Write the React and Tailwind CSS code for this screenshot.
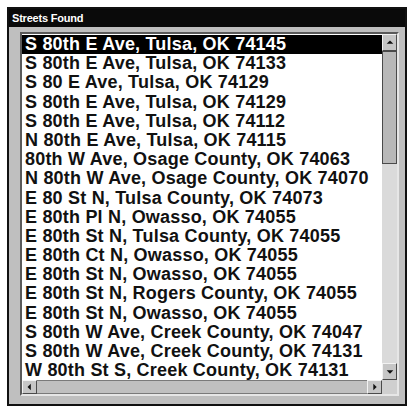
const streets = [
  "S 80th E Ave, Tulsa, OK 74145",
  "S 80th E Ave, Tulsa, OK 74133",
  "S 80 E Ave, Tulsa, OK 74129",
  "S 80th E Ave, Tulsa, OK 74129",
  "S 80th E Ave, Tulsa, OK 74112",
  "N 80th E Ave, Tulsa, OK 74115",
  "80th W Ave, Osage County, OK 74063",
  "N 80th W Ave, Osage County, OK 74070",
  "E 80 St N, Tulsa County, OK 74073",
  "E 80th Pl N, Owasso, OK 74055",
  "E 80th St N, Tulsa County, OK 74055",
  "E 80th Ct N, Owasso, OK 74055",
  "E 80th St N, Owasso, OK 74055",
  "E 80th St N, Rogers County, OK 74055",
  "E 80th St N, Owasso, OK 74055",
  "S 80th W Ave, Creek County, OK 74047",
  "S 80th W Ave, Creek County, OK 74131",
  "W 80th St S, Creek County, OK 74131",
];

// Small bevelled scroll button with a solid triangle
function ArrowBtn({ dir, className = "" }) {
  const pts = {
    up: "2,7 6,3 10,7",
    down: "2,4 6,8 10,4",
    left: "7,2 3,6 7,10",
    right: "4,2 8,6 4,10",
  }[dir];
  return (
    <div
      className={`shrink-0 flex items-center justify-center bg-[#c6c6c6] border border-t-[#f2f2f2] border-l-[#f2f2f2] border-r-[#4a4a4a] border-b-[#4a4a4a] ${className}`}
    >
      <svg width="10" height="10" viewBox="0 0 12 12">
        <polygon points={pts} fill="#111" />
      </svg>
    </div>
  );
}

export default function App() {
  return (
    <div
      className="w-[412px] h-[409px] bg-white pt-[7px] pl-[7px] pr-[5px] pb-[3px]"
      style={{ fontFamily: "'Liberation Sans', Arial, sans-serif" }}
    >
      <div className="h-full w-full border-2 border-[#111] bg-[#bfbfbf] flex flex-col">
        <div className="h-[18px] shrink-0 bg-[#0a0a0a] text-white text-[11px] font-bold leading-[18px] pl-[3px] tracking-[-0.2px]">
          Streets Found
        </div>
        <div className="flex-1 min-h-0 pl-[11px] pt-[5px] pr-[6px] pb-[8px]">
          <div className="h-full flex flex-col border-2 border-t-[#5a5a5a] border-l-[#5a5a5a] border-r-[#e6e6e6] border-b-[#e6e6e6]">
            <div className="flex-1 flex min-h-0 bg-white">
              <div className="flex-1 min-w-0 pt-[1px] overflow-hidden">
                {streets.map((s, i) => (
                  <div
                    key={i}
                    className={`h-[19.2px] leading-[19.2px] text-[18px] font-bold pl-[3px] whitespace-nowrap tracking-[0.2px] ${
                      i === 0 ? "bg-black text-white" : "text-[#111]"
                    }`}
                  >
                    {s}
                  </div>
                ))}
              </div>
              <div className="w-[15px] shrink-0 flex flex-col bg-[#dadada]">
                <ArrowBtn dir="up" className="h-[17px]" />
                <div className="h-[113px] shrink-0 bg-[#b8b8b8] border border-[#4a4a4a]" />
                <div className="flex-1" />
                <ArrowBtn dir="down" className="h-[17px]" />
              </div>
            </div>
            <div className="h-[14px] shrink-0 flex bg-[#c6c6c6]">
              <ArrowBtn dir="left" className="w-[15px]" />
              <div className="flex-1 border-y border-[#7a7a7a] bg-[#c0c0c0]" />
              <ArrowBtn dir="right" className="w-[15px]" />
              <div className="w-[15px] shrink-0 bg-[#cfcfcf]" />
            </div>
          </div>
        </div>
      </div>
    </div>
  );
}
